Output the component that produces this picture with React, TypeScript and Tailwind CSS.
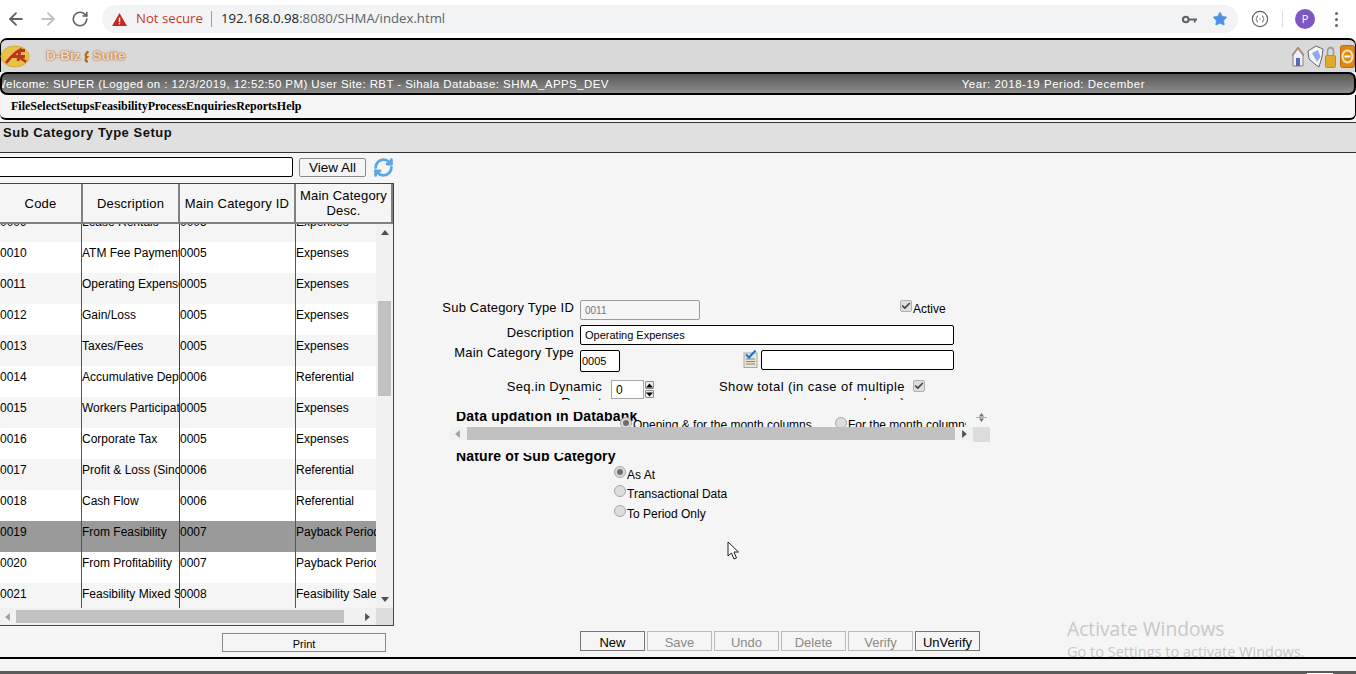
import { ArrowLeft, ArrowRight, Check, RefreshCw, RotateCw, Star } from "lucide-react";

const rows = [
  ["0009", "Lease Rentals", "0005", "Expenses"],
  ["0010", "ATM Fee Payment", "0005", "Expenses"],
  ["0011", "Operating Expenses", "0005", "Expenses"],
  ["0012", "Gain/Loss", "0005", "Expenses"],
  ["0013", "Taxes/Fees", "0005", "Expenses"],
  ["0014", "Accumulative Depreciation", "0006", "Referential"],
  ["0015", "Workers Participation", "0005", "Expenses"],
  ["0016", "Corporate Tax", "0005", "Expenses"],
  ["0017", "Profit & Loss (Since", "0006", "Referential"],
  ["0018", "Cash Flow", "0006", "Referential"],
  ["0019", "From Feasibility", "0007", "Payback Period"],
  ["0020", "From Profitability", "0007", "Payback Period"],
  ["0021", "Feasibility Mixed Sale", "0008", "Feasibility Sales"],
];

const menus = ["File", "Select", "Setups", "Feasibility", "Process", "Enquiries", "Reports", "Help"];
const actions = [
  { label: "New", on: true },
  { label: "Save", on: false },
  { label: "Undo", on: false },
  { label: "Delete", on: false },
  { label: "Verify", on: false },
  { label: "UnVerify", on: true },
];
const natures = [
  { label: "As At", on: true, h: "h-[19px]" },
  { label: "Transactional Data", on: false, h: "h-[20px]" },
  { label: "To Period Only", on: false, h: "h-[20px]" },
];

function Radio({ on }: { on?: boolean }) {
  return (
    <span className="flex h-3 w-3 shrink-0 items-center justify-center rounded-full border border-[#a8a8a8] bg-[#dcdcdc]">
      {on && <span className="h-[6px] w-[6px] rounded-full bg-[#6e6e6e]" />}
    </span>
  );
}

function CheckBox() {
  return (
    <span className="flex h-3 w-3 shrink-0 items-center justify-center rounded-[2px] border border-[#b0b0b0] bg-[#dedede]">
      <Check size={10} strokeWidth={4} className="text-[#444]" />
    </span>
  );
}

function Triangle({ dir }: { dir: "up" | "down" | "left" | "right" }) {
  const pts = { up: "0,6 5,0 10,6", down: "0,0 5,6 10,0", left: "6,0 0,5 6,10", right: "0,0 6,5 0,10" }[dir];
  const box = dir === "up" || dir === "down" ? "0 0 10 6" : "0 0 6 10";
  return (
    <svg viewBox={box} className={dir === "up" || dir === "down" ? "h-[5px] w-2" : "h-2 w-[5px]"}>
      <polygon points={pts} fill="currentColor" />
    </svg>
  );
}

function ChromeBar() {
  return (
    <div className="flex h-[38px] items-center bg-white font-['Open_Sans',sans-serif]">
      <ArrowLeft size={20} strokeWidth={2.2} className="ml-[6px] text-[#5f6368]" />
      <ArrowRight size={20} strokeWidth={2.2} className="ml-[12px] text-[#bdc1c6]" />
      <RotateCw size={18} strokeWidth={2.2} className="ml-[13px] text-[#5f6368]" />
      <div className="ml-[13px] flex h-[28px] w-[1136px] items-center rounded-full bg-[#f1f3f4]">
        <svg viewBox="0 0 16 14" className="ml-[10px] h-[13px] w-[15px]">
          <path d="M8 0 L16 14 H0 Z" fill="#c5281c" />
          <rect x="7.2" y="5" width="1.6" height="4.6" fill="#fff" />
          <rect x="7.2" y="10.6" width="1.6" height="1.6" fill="#fff" />
        </svg>
        <span className="ml-[9px] text-[13.2px] text-[#c5392a]">Not secure</span>
        <span className="ml-[8px] h-[16px] w-px bg-[#9aa0a6]" />
        <span className="ml-[9px] text-[13.2px] text-[#202124]">
          192.168.0.98<span className="text-[#5f6368]">:8080/SHMA/index.html</span>
        </span>
        <svg viewBox="0 0 16 9" className="ml-auto h-[9px] w-[15px]">
          <circle cx="4" cy="4.5" r="3" fill="none" stroke="#5f6368" strokeWidth="2.2" />
          <path d="M7 3.4 H16 V5.6 H14.6 V7.6 H12.6 V5.6 H7 Z" fill="#5f6368" />
        </svg>
        <Star size={16} fill="#4a90e2" strokeWidth={1} className="ml-[15px] mr-[10px] text-[#4a90e2]" />
      </div>
      <svg viewBox="0 0 18 18" className="ml-[13px] h-[18px] w-[18px]">
        <circle cx="9" cy="9" r="7.6" fill="none" stroke="#5f6368" strokeWidth="1.2" />
        <path d="M7 5.5 C5.8 5.5 6.2 8.6 4.8 9 C6.2 9.4 5.8 12.5 7 12.5 M11 5.5 C12.2 5.5 11.8 8.6 13.2 9 C11.8 9.4 12.2 12.5 11 12.5" fill="none" stroke="#5f6368" strokeWidth="1" />
        <circle cx="9" cy="9" r="0.7" fill="#5f6368" />
      </svg>
      <span className="ml-[13px] h-[16px] w-px bg-[#dadce0]" />
      <span className="ml-[12px] flex h-5 w-5 items-center justify-center rounded-full bg-[#7e57c2] text-[11px] text-white">P</span>
      <span className="ml-[20px] flex flex-col gap-[3px]">
        <span className="h-[3px] w-[3px] rounded-full bg-[#5f6368]" />
        <span className="h-[3px] w-[3px] rounded-full bg-[#5f6368]" />
        <span className="h-[3px] w-[3px] rounded-full bg-[#5f6368]" />
      </span>
    </div>
  );
}

function LogoBar() {
  return (
    <div className="flex h-[34px] items-center rounded-t-[7px] border-x border-t-2 border-black bg-[#d9d9d9] pt-[1px]">
      <svg viewBox="0 0 30 23" className="-ml-px h-[23px] w-[30px]">
        <ellipse cx="15" cy="11.5" rx="14" ry="10.5" fill="#e3c448" stroke="#d8a838" />
        <path d="M6 18 C10 13 14 8 20 5 L18 16 M11 11.5 H25 M18 11 L26 17 M19 5.5 H25" fill="none" stroke="#c0301c" strokeWidth="2.8" />
      </svg>
      <span className="ml-[16px] flex items-center font-['Liberation_Sans',sans-serif] text-[13.5px] font-bold text-[#f0dac0] [text-shadow:0_0_2px_#a8622c,0_0_1px_#a8622c]">
        D-Biz
        <svg viewBox="0 0 6 12" className="mx-[3px] h-[13px] w-[6px]">
          <path d="M4.5 1 C1 3 1 6 3 6.5 C1 8 1 11 4 11" fill="none" stroke="#b8680f" strokeWidth="2.2" />
        </svg>
        Suite
      </span>
      <div className="ml-auto flex items-center">
        <svg viewBox="0 0 14 21" className="h-[21px] w-[14px]">
          <path d="M7 1 L13 9 H12 V20 H2 V9 H1 Z" fill="#eef0fa" stroke="#8d7f8c" />
          <path d="M7 1 L13 9 L11.5 9.5 L7 3.5 L2.5 9.5 L1 9 Z" fill="#b58a72" />
          <rect x="5" y="12" width="4" height="8" fill="#5568b8" />
        </svg>
        <svg viewBox="0 0 17 23" className="ml-[2px] h-[23px] w-[17px]">
          <path d="M1 6 L9 1 L16 4 L15 12 L12 22 L9 20 L2 14 Z" fill="#f4f4f4" stroke="#666" />
          <path d="M5 8 L11 5 L13.5 12 L10 17 Z" fill="#8fa8ee" />
        </svg>
        <svg viewBox="0 0 11 22" className="ml-px h-[22px] w-[11px]">
          <path d="M2.5 10 V5 C2.5 0.5 8.5 0.5 8.5 5 V10" fill="none" stroke="#9a9a9a" strokeWidth="1.6" />
          <rect x="0.5" y="9.5" width="10" height="12" rx="1" fill="#e0a92e" stroke="#c68a1c" />
        </svg>
        <svg viewBox="0 0 15 23" className="ml-[4px] h-[23px] w-[15px]">
          <rect x="0.5" y="0.5" width="14" height="22" rx="2" fill="#dc8a16" stroke="#b86c0c" />
          <ellipse cx="7.5" cy="11.5" rx="5" ry="6" fill="none" stroke="#fbe3b4" strokeWidth="2" />
          <rect x="4.5" y="10.5" width="6" height="2" fill="#fff" />
        </svg>
      </div>
    </div>
  );
}

function WelcomeBar() {
  return (
    <div className="flex h-[23px] items-center justify-between overflow-hidden rounded-[7px] border-2 border-black bg-gradient-to-b from-[#585858] to-[#8e8e8e] pt-[2px] font-['Liberation_Sans',sans-serif] text-[11.5px] tracking-[0.42px] text-white">
      <span className="-ml-[7px] whitespace-nowrap">
        Welcome: SUPER (Logged on : 12/3/2019, 12:52:50 PM) User Site: RBT - Sihala Database: SHMA_APPS_DEV
      </span>
      <span className="mr-[209px] whitespace-nowrap tracking-[0.52px]">Year: 2018-19 Period: December</span>
    </div>
  );
}

function MenuBar() {
  return (
    <div className="mb-[2px] flex h-[25px] items-center rounded-b-[6px] border-b-2 border-r border-black bg-[#f5f5f5] pb-[2px] pl-[11px] font-['Liberation_Serif',serif] text-[12px] font-bold text-black">
      {menus.map((m) => (
        <span key={m}>{m}</span>
      ))}
    </div>
  );
}

function GridPane() {
  return (
    <div className="flex w-[394px] shrink-0 flex-col font-['Liberation_Sans',sans-serif]">
      <div className="flex h-[30px] items-center pb-[2px]">
        <input readOnly className="-ml-[8px] h-[20px] w-[301px] rounded-[2px] border border-black bg-white" />
        <button className="ml-[6px] h-[19px] w-[67px] rounded-[2px] border border-[#8a8a8a] text-[13.5px] leading-[17px] text-black">View All</button>
        <RefreshCw size={21} strokeWidth={3.2} className="ml-[7px] text-[#5aa5e5]" />
      </div>
      <div className="h-[443px] w-[394px] border-y border-r border-[#444]">
        <div className="grid h-[40px] grid-cols-[83px_97px_116px_97px] text-center text-[13px] leading-[15px] tracking-[0.2px] text-black">
          {["Code", "Description", "Main Category ID", "Main Category Desc."].map((h) => (
            <div key={h} className="flex items-center justify-center border-2 border-l-0 border-t-0 border-[#808080] bg-[#f5f5f5]">
              {h}
            </div>
          ))}
        </div>
        <div className="flex h-[384px]">
          <div className="h-full w-[376px] overflow-hidden">
            <div className="-mt-[13px]">
              {rows.map((r, i) => (
                <div
                  key={r[0]}
                  className={`grid h-[31px] grid-cols-[82px_98px_116px_80px] text-[12px] leading-[23px] text-black ${
                    r[0] === "0019" ? "bg-[#9a9a9a]" : i % 2 === 0 ? "bg-[#f5f5f5]" : "bg-white"
                  }`}
                >
                  <div className="overflow-hidden whitespace-nowrap border-r-[1.5px] border-[#555]">{r[0]}</div>
                  <div className="overflow-hidden whitespace-nowrap border-r-[1.5px] border-[#444]">{r[1]}</div>
                  <div className="overflow-hidden whitespace-nowrap border-r-[1.5px] border-[#555]">{r[2]}</div>
                  <div className="overflow-hidden whitespace-nowrap">{r[3]}</div>
                </div>
              ))}
            </div>
          </div>
          <div className="flex w-[17px] flex-col items-center bg-[#f1f1f1] text-[#505050]">
            <div className="flex h-[17px] items-center"><Triangle dir="up" /></div>
            <div className="mt-[60px] h-[95px] w-[13px] bg-[#c1c1c1]" />
            <div className="mt-auto flex h-[17px] items-center"><Triangle dir="down" /></div>
          </div>
        </div>
        <div className="flex h-[17px]">
          <div className="flex w-[376px] items-center bg-[#f1f1f1] text-[#a0a0a0]">
            <div className="ml-[5px]"><Triangle dir="left" /></div>
            <div className="ml-[6px] h-[13px] w-[328px] bg-[#c1c1c1]" />
            <div className="ml-auto mr-[6px] text-[#505050]"><Triangle dir="right" /></div>
          </div>
          <div className="w-[17px] bg-[#dcdcdc]" />
        </div>
      </div>
      <div className="mt-[7px] flex pl-[222px]">
        <button className="h-[19px] w-[164px] border border-[#8a8a8a] pt-[3px] text-[11px] leading-[14px] text-black">Print</button>
      </div>
    </div>
  );
}

function FormPane() {
  return (
    <div className="flex flex-1 flex-col pb-[6px] pt-[147px] font-['Liberation_Sans',sans-serif] text-[12px] text-black">
      <div className="flex h-[25px] items-start">
        <label className="w-[180px] text-right text-[13px] leading-[16px] tracking-[0.2px]">Sub Category Type ID</label>
        <input readOnly value="0011" className="ml-[6px] h-[20px] w-[120px] rounded-[2px] border border-[#9a9a9a] bg-[#f5f5f5] px-[4px] text-[10px] text-[#777]" />
        <span className="ml-[200px]"><CheckBox /></span>
        <span className="ml-px mt-[1px] leading-[16px]">Active</span>
      </div>
      <div className="flex h-[25px] items-start">
        <label className="w-[180px] text-right text-[13px] leading-[16px] tracking-[0.2px]">Description</label>
        <input readOnly value="Operating Expenses" className="ml-[6px] h-[20px] w-[374px] rounded-[2px] border border-black bg-white px-[4px] text-[11px] text-black" />
      </div>
      <div className="flex h-[30px] items-start">
        <label className="-mt-[5px] w-[180px] text-right text-[13px] leading-[16px] tracking-[0.2px]">Main Category Type</label>
        <input readOnly value="0005" className="ml-[6px] h-[22px] w-[40px] rounded-[2px] border border-black bg-white px-[1px] text-[11px] text-black" />
        <svg viewBox="0 0 15 18" className="ml-[123px] h-[18px] w-[15px]">
          <rect x="1" y="3" width="13" height="14.5" fill="#efe6c8" stroke="#a8a8a8" />
          <path d="M3 9 H12 M3 11.5 H12 M3 14 H12" stroke="#6a7ec0" />
          <path d="M3 4.5 L6 7.5 L12.5 0.5" fill="none" stroke="#1f6fc8" strokeWidth="2" />
        </svg>
        <input readOnly className="ml-[3px] h-[20px] w-[193px] rounded-[2px] border border-black bg-white" />
      </div>
      <div className="flex h-[20px] items-start overflow-hidden">
        <label className="ml-[112px] mt-[-1px] w-[96px] shrink-0 text-right text-[13px] leading-[16px] tracking-[0.3px]">Seq.in Dynamic Report</label>
        <input readOnly value="0" className="ml-[9px] h-[19px] w-[33px] border border-[#a8a8a8] bg-white px-[4px] text-[12px]" />
        <div className="ml-[1px] mt-[1px] flex w-[9px] flex-col gap-px text-black">
          <span className="flex h-[8px] items-center justify-center rounded-[1px] border border-[#8a8a8a] bg-[#eee]"><Triangle dir="up" /></span>
          <span className="flex h-[8px] items-center justify-center rounded-[1px] border border-[#8a8a8a] bg-[#eee]"><Triangle dir="down" /></span>
        </div>
        <label className="ml-[66px] mt-[-1px] flex w-[185px] shrink-0 flex-col items-end whitespace-nowrap text-[13px] leading-[16px] tracking-[0.43px]">
          <span>Show total (in case of multiple</span>
          <span>columns)</span>
        </label>
        <span className="ml-[8px]"><CheckBox /></span>
      </div>
      <div className="ml-[56px] mt-[12px] flex h-[30px] w-[540px] overflow-hidden">
        <div className="flex w-[523px] flex-col">
          <div className="flex h-[15px] overflow-hidden">
            <div className="-mt-[4px] ml-[6px] w-[164px] shrink-0 whitespace-nowrap text-[14px] font-bold leading-[16px] tracking-[0.2px]">Data updation in Databank</div>
            <div className="mt-[5px] flex items-start">
              <span className="-mr-[2px]"><Radio on /></span>
              <span className="ml-[3px] w-[202px] whitespace-nowrap leading-[16px]">Opening &amp; for the month columns</span>
              <Radio />
              <span className="ml-[1px] w-[118px] overflow-hidden whitespace-nowrap leading-[16px]">For the month columns</span>
            </div>
          </div>
          <div className="flex h-[13px] items-center bg-[#f1f1f1] text-[#a0a0a0]">
            <div className="ml-[5px]"><Triangle dir="left" /></div>
            <div className="ml-[7px] h-[13px] w-[488px] bg-[#c1c1c1]" />
            <div className="ml-auto mr-[6px] text-[#505050]"><Triangle dir="right" /></div>
          </div>
        </div>
        <div className="flex w-[17px] flex-col items-center">
          <svg viewBox="0 0 11 11" className="h-[11px] w-[11px] text-[#707070]">
            <path d="M0 5.5 H11" stroke="#b0b0b0" />
            <path d="M5.5 1 L8 4.5 H3 Z M5.5 10 L8 6.5 H3 Z" fill="currentColor" />
          </svg>
          <div className="mt-[4px] h-[15px] w-full bg-[#dcdcdc]" />
        </div>
      </div>
      <div className="ml-[62px] mt-[11px] h-[12px] overflow-hidden">
        <div className="-mt-[5px] text-[14px] font-bold leading-[16px] tracking-[0.15px]">Nature of Sub Category</div>
      </div>
      <div className="ml-[220px] mt-[2px] flex flex-col">
        {natures.map((n) => (
          <div key={n.label} className={`flex items-start ${n.h}`}>
            <span className="-mt-px"><Radio on={n.on} /></span>
            <span className="ml-px leading-[16px]">{n.label}</span>
          </div>
        ))}
      </div>
      <div className="ml-[186px] mt-auto flex gap-[2px]">
        {actions.map((a) => (
          <button
            key={a.label}
            className={`h-[20px] w-[65px] pt-[4px] text-[13px] leading-[14px] ${
              a.on ? "border border-[#777] text-black" : "border border-[#bbb] text-[#8a8a8a]"
            }`}
          >
            {a.label}
          </button>
        ))}
      </div>
    </div>
  );
}

export default function App() {
  return (
    <div className="relative h-[674px] w-[1356px] overflow-hidden bg-[#f5f5f5]">
      <ChromeBar />
      <LogoBar />
      <WelcomeBar />
      <MenuBar />
      <div className="h-[31px] border-y border-[#333] bg-[#e0e0e0] pl-[3px] font-['Liberation_Sans',sans-serif] text-[13px] font-bold leading-[19px] tracking-[0.52px] text-[#111]">
        Sub Category Type Setup
      </div>
      <div className="flex h-[504px]">
        <GridPane />
        <FormPane />
      </div>
      <div className="h-[14px] border-t-2 border-black" />
      <div className="flex h-[3px] bg-[#5a5a5a]">
        <span className="ml-[1307px] mt-[2px] h-px w-[26px] bg-white" />
      </div>

      {/* mouse pointer over the form */}
      <svg viewBox="0 0 13 20" className="absolute left-[727px] top-[541px] h-5 w-[13px]">
        <path d="M1 1 V15 L4.5 12 L7 18 L9.5 17 L7 11 H11.5 Z" fill="#fff" stroke="#222" strokeWidth="1" />
      </svg>

      {/* windows watermark, cut off by the footer line */}
      <div className="pointer-events-none absolute left-[1067px] top-[616px] h-[41px] overflow-hidden font-['Open_Sans',sans-serif] text-[#c8c8c8]">
        <div className="text-[19.2px] leading-[26px]">Activate Windows</div>
        <div className="text-[14.5px] leading-[20px]">Go to Settings to activate Windows.</div>
      </div>
    </div>
  );
}
